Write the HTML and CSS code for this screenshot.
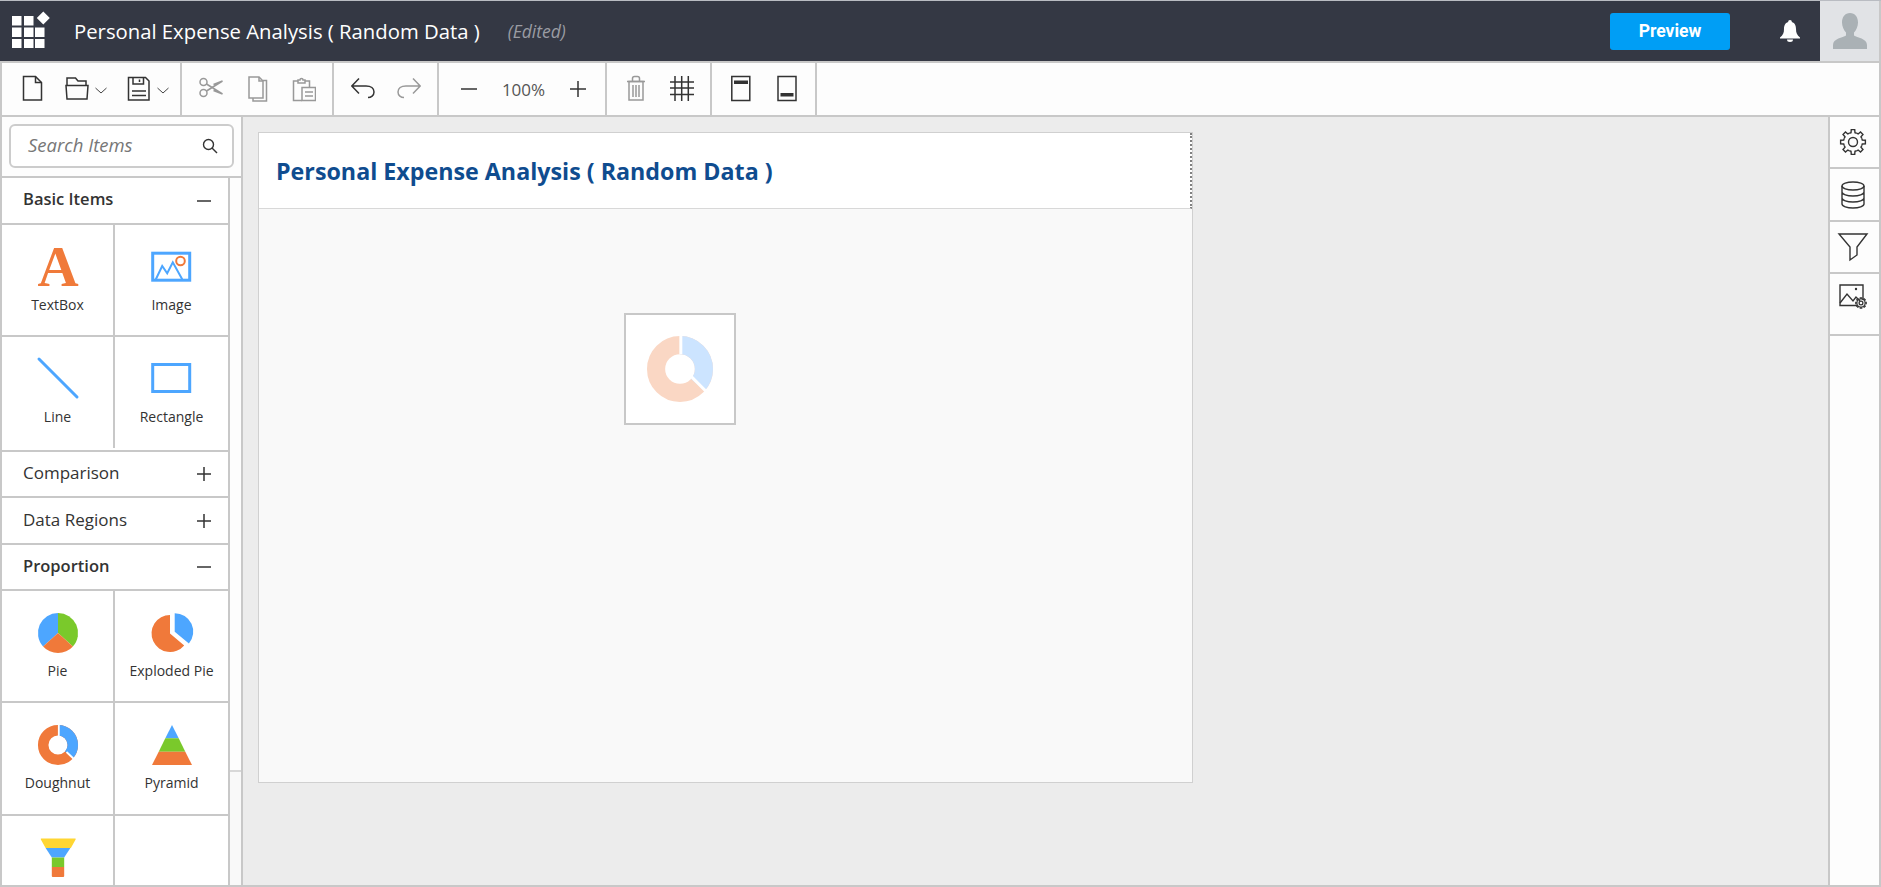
FILE: index.html
```html
<!DOCTYPE html>
<html lang="en">
<head>
<meta charset="utf-8">
<title>Personal Expense Analysis</title>
<link rel="stylesheet" href="styles.css">
</head>
<body>
<svg class="defs" width="0" height="0" aria-hidden="true"><defs>
  <g id="gear"><g id="tooth4"><g id="tooth2"><path id="tooth" d="M-3.64-8.78L-1.98-9.29-1.74-12.38H1.74L1.98-9.29 3.64-8.78"/><use href="#tooth" transform="rotate(45)"/></g><use href="#tooth2" transform="rotate(90)"/></g><use href="#tooth4" transform="rotate(180)"/></g>
</defs></svg>
<div class="app">
  <header class="header">
    <svg class="logo" width="38" height="33" viewBox="0 0 38 33" fill="#fff"><path d="M0 1h9.500v9.500H0zM12 1h9.500v9.500H12zM0 12.500h9.500V22H0zM12 12.500h9.500V22H12zM23 12.500h9.500V22H23zM0 24h9.500v9H0zM12 24h9.500v9H12zM23 24h9.500v9H23zM31.300-3.500l6.500 6.500-6.500 6.500-6.500-6.500z"/></svg>
    <span class="doc-title">Personal Expense Analysis ( Random Data )</span>
    <span class="doc-state">(Edited)</span>
    <button class="preview">Preview</button>
    <svg class="bell" width="20" height="22" viewBox="0 0 20 22" fill="#fff"><path d="M10 0a1.800 1.800 0 0 1 1.800 2C15 3 16 6 16 9c0 4 1 6 4 8.500v1H0v-1C3 15 4 13 4 9c0-3 1-6 4.200-7A1.800 1.800 0 0 1 10 0zM7 19.500h6a3 2.500 0 0 1-6 0z"/></svg>
    <div class="avatar">
      <svg width="34" height="36" viewBox="0 0 34 36" fill="#aab1b5"><path d="M17 0c5 0 8 4 8 9.500 0 4-2 8-4 10v3c3 2 13 3 13 9.500v4H0v-4c0-6.500 10-7.500 13-9.500v-3c-2-2-4-6-4-10C9 4 12 0 17 0z"/></svg>
    </div>
  </header>

  <nav class="toolbar">
    <div class="tb-group tb-file">
      <svg class="ic dark" viewBox="0 0 24 28"><path d="M2.500 1.500h12l6 6v17.500h-18z"/><path d="M14.500 1.500v6h6"/></svg>
      <svg class="ic dark gap20" viewBox="0 0 24 28"><path d="M2 10V3h8.500l2.500 3h8v4"/><path d="M1 10.500h22l-1 13.500H2z"/></svg>
      <svg class="chev" viewBox="0 0 12 28"><path d="M.5 13l5.500 5 5.500-5"/></svg>
      <svg class="ic dark gap20" viewBox="0 0 24 28"><path d="M1.500 2.500h17l3.500 3.500v19H1.500z"/><path d="M6 2.500v6.500h10.500V2.500M12.500 4.500v2.500M5 16h14M5 20.500h14"/></svg>
      <svg class="chev" viewBox="0 0 12 28"><path d="M.5 13l5.500 5 5.500-5"/></svg>
    </div>
    <div class="tb-group tb-clip">
      <svg class="ic gray" viewBox="0 0 24 28"><circle cx="4.500" cy="7" r="3.500"/><circle cx="4.500" cy="18" r="3.500"/><path d="M7.500 9l16 10-9-3.500M7.500 16l16-10-9 3.500"/></svg>
      <svg class="ic gray" viewBox="0 0 24 28"><path d="M3 2h10l4 4v17H3z"/><path d="M13 2v4h4M17 5.500h3.500V26H7v-3"/></svg>
      <svg class="ic gray" viewBox="0 0 24 28"><path d="M10 25.500H1.500V6H6M13 6h4.500v6"/><path d="M6 8V5h2a1.500 1.500 0 0 1 3 0h2v3z"/><path d="M10 12.500h13.500v13H10zM13 17h8M13 21h8"/></svg>
    </div>
    <div class="tb-group tb-hist">
      <svg class="ic dark" viewBox="0 0 24 28"><path d="M8 3.500L.8 11 8 18.500M1 11h14c5 0 8 2.500 8 6 0 3.500-3 5.500-6 5.500"/></svg>
      <svg class="ic gray" viewBox="0 0 24 28"><path d="M16 3.500L23.200 11 16 18.500M23 11H9c-5 0-8 2.500-8 6 0 3.500 3 5.500 6 5.500"/></svg>
    </div>
    <div class="tb-group tb-zoom">
      <svg class="ic dark" viewBox="0 0 24 28"><path d="M4 14h16"/></svg>
      <span class="zoom-val">100%</span>
      <svg class="ic dark" viewBox="0 0 24 28"><path d="M4 14h16M12 6v16"/></svg>
    </div>
    <div class="tb-group tb-hist">
      <svg class="ic gray" viewBox="0 0 24 28"><path d="M3 6.500h18M8.500 6V3.500a2 2 0 0 1 2-2h3a2 2 0 0 1 2 2V6"/><path d="M5 6.500h14v18.500H5zM9 10v12M12 10v12M15 10v12"/></svg>
      <svg class="ic dark" viewBox="0 0 24 28"><path d="M0 7h24M0 13h24M0 19.500h24M5 1v25M11.700 1v25M18.300 1v25"/></svg>
    </div>
    <div class="tb-group tb-hist">
      <svg class="ic dark" viewBox="0 0 24 28"><rect x="2.800" y="1.500" width="18" height="24"/><path class="solid" d="M5 5.500h14v3.500H5z"/></svg>
      <svg class="ic dark" viewBox="0 0 24 28"><rect x="3" y="1.500" width="18" height="24"/><path class="solid" d="M5.500 18h13v3.500h-13z"/></svg>
    </div>
  </nav>

  <main class="main">
    <aside class="sidebar">
      <div class="search-row">
        <div class="search">
          <span class="search-text">Search Items</span>
          <svg class="search-ic" width="16" height="16" viewBox="0 0 16 16"><circle cx="6.500" cy="6.500" r="5"/><path d="M10 10l5 5"/></svg>
        </div>
      </div>
      <div class="side-body">
        <div class="accordion">
          <div class="acc-head open tall"><span>Basic Items</span><svg class="sign" viewBox="0 0 14 14"><path d="M0 7h14"/></svg></div>
          <div class="cells">
            <div class="cell"><svg class="cell-ic" viewBox="0 0 40 40"><text class="glyph-a" x="20" y="39" text-anchor="middle">A</text></svg><span class="label">TextBox</span></div>
            <div class="cell"><svg class="cell-ic" viewBox="0 0 40 40"><rect x=".7" y="6.200" width="37" height="27" class="ln"/><path class="ln thin" d="M3.500 33l6.700-14 5 7.300 5.600-11 9.400 17"/><circle cx="28.500" cy="14" r="4.300" class="or"/></svg><span class="label">Image</span></div>
          </div>
          <div class="cells tall-row">
            <div class="cell"><svg class="cell-ic" viewBox="0 0 40 40"><path class="ln" d="M1 0l38 38" stroke-linecap="round"/></svg><span class="label">Line</span></div>
            <div class="cell"><svg class="cell-ic" viewBox="0 0 40 40"><rect x=".7" y="5.500" width="37" height="27" class="ln"/></svg><span class="label">Rectangle</span></div>
          </div>
          <div class="acc-head"><span>Comparison</span><svg class="sign" viewBox="0 0 14 14"><path d="M0 7h14M7 0v14"/></svg></div>
          <div class="acc-head tall"><span>Data Regions</span><svg class="sign" viewBox="0 0 14 14"><path d="M0 7h14M7 0v14"/></svg></div>
          <div class="acc-head open"><span>Proportion</span><svg class="sign" viewBox="0 0 14 14"><path d="M0 7h14"/></svg></div>
          <div class="cells">
            <div class="cell"><svg class="cell-ic" viewBox="0 0 40 40"><path fill="#4da6ff" d="M20 20L5.100 33.400A20 20 0 0 1 20 0z"/><path fill="#7ac92b" d="M20 20V0a20 20 0 0 1 14.900 33.400z"/><path fill="#f0793a" d="M20 20l14.900 13.400a20 20 0 0 1-29.800 0z"/></svg><span class="label">Pie</span></div>
            <div class="cell"><svg class="cell-ic" viewBox="0 0 40 40"><path fill="#f0793a" d="M18 20.500V2a18.500 18.500 0 1 0 14.200 30.400z"/><path fill="#4da6ff" d="M22.700 18.700V.2a18.500 18.500 0 0 1 14.200 30.400z"/></svg><span class="label">Exploded Pie</span></div>
          </div>
          <div class="cells tall-one">
            <div class="cell"><svg class="cell-ic" viewBox="0 0 40 40"><circle class="ring" cx="20" cy="20" r="14.800" stroke="#f0793a"/><circle class="ring" cx="20" cy="20" r="14.800" stroke="#4da6ff" pathLength="360" stroke-dasharray="132 228" transform="rotate(-90 20 20)"/><path class="gap" d="M20.800-1V11M28.500 27L38 36"/></svg><span class="label">Doughnut</span></div>
            <div class="cell"><svg class="cell-ic" viewBox="0 0 40 40"><path fill="#4da6ff" d="M20 0l6.700 13.300H13.300z"/><path fill="#7ac92b" d="M13.300 13.300h13.400l6.600 13.400H6.700z"/><path fill="#f0793a" d="M6.700 26.700h26.600L40 40H0z"/></svg><span class="label">Pyramid</span></div>
          </div>
          <div class="cells last">
            <div class="cell"><svg class="cell-ic" viewBox="0 0 40 42"><path fill="#ffd633" d="M1.500 0.500h36.500q1 0 .5 1l-5 9H7l-5-9q-.5-1 .5-1z"/><path fill="#4da6ff" d="M7 10.500h26l-6.500 10h-13z"/><path fill="#7ac92b" d="M13.500 20.500h13v10h-13z"/><path fill="#f0793a" d="M13.500 30.500h13V40q0 1-1 1h-11q-1 0-1-1z"/></svg></div>
            <div class="cell"></div>
          </div>
        </div>
        <div class="scroll"><div class="thumb"></div></div>
      </div>
    </aside>

    <section class="stage">
      <div class="report">
        <div class="report-head"><h1 class="report-title">Personal Expense Analysis ( Random Data )</h1></div>
        <div class="widget">
          <svg width="66" height="66" viewBox="0 0 40 40"><circle class="ring wide" cx="20" cy="20" r="14.500" stroke="#fad7c4"/><circle class="ring wide" cx="20" cy="20" r="14.500" stroke="#cce4ff" pathLength="360" stroke-dasharray="132 228" transform="rotate(-90 20 20)"/><path class="gap" d="M20.500-1V11M26.900 24.600L38 35.800"/></svg>
        </div>
      </div>
    </section>

    <aside class="rail">
      <div class="rail-item r1"><svg class="ic-rail" width="28" height="28" viewBox="-14 -14 28 28"><use href="#gear"/><circle r="4.500"/></svg></div>
      <div class="rail-item r2"><svg class="ic-rail" width="24" height="28" viewBox="0 0 24 28"><ellipse cx="12" cy="5" rx="11" ry="4"/><path d="M1 5v18c0 2.200 5 4 11 4s11-1.800 11-4V5M1 11c0 2.200 5 4 11 4s11-1.800 11-4M1 17c0 2.200 5 4 11 4s11-1.800 11-4"/></svg></div>
      <div class="rail-item r1"><svg class="ic-rail" width="30" height="28" viewBox="0 0 30 28"><path d="M1 1h28L19 14v8l-7 5V14z"/></svg></div>
      <div class="rail-item r3"><svg class="ic-rail" width="28" height="28" viewBox="0 0 28 28"><path d="M18 21.500H1V1h23v15"/><path d="M1 19l7-9 6 7 3-4 4 4"/><circle cx="17" cy="5" r="1.200" class="solid"/><g transform="translate(22 19) scale(.42)" class="small-gear"><use href="#gear"/><circle r="4.500"/></g></svg></div>
    </aside>
  </main>
</div>
</body>
</html>
```
FILE: styles.css
```css
* { box-sizing: border-box; }
html, body { margin: 0; height: 100%; overflow: hidden; }
body { font-family: "Open Sans", "Noto Sans", sans-serif; color: #333; background: #fff; }
.defs { position: absolute; }
.app { height: 887px; display: flex; flex-direction: column; border-top: 1px solid #b9bcc2; border-bottom: 2px solid #c8c8c8; }

.header { height: 62px; flex: none; display: flex; align-items: center; background: #343844; border-bottom: 2px solid #c8c8c8; border-right: 2px solid #c8c8c8; }
.logo { margin-left: 12px; flex: none; overflow: visible; }
.doc-title { margin-left: 24px; color: #fff; font-size: 20.300px; white-space: nowrap; }
.doc-state { margin-left: 28px; color: #9a9ca3; font-size: 17.500px; font-style: italic; }
.preview { margin-left: auto; width: 120px; height: 37px; border: 0; border-radius: 3px; background: #009ef5; color: #fff; font: 700 17.500px Roboto, sans-serif; }
.bell { margin-left: 50px; flex: none; }
.avatar { margin-left: 20px; width: 59px; height: 60px; background: #e1e3e6; display: flex; align-items: center; justify-content: center; }

.toolbar { height: 54px; flex: none; display: flex; background: #fdfdfd; border-bottom: 2px solid #c8c8c8; border-left: 2px solid #c8c8c8; border-right: 2px solid #c8c8c8; }
.tb-group { height: 52px; display: flex; align-items: center; border-right: 2px solid #c8c8c8; }
.tb-file { width: 180px; padding-left: 19px; }
.tb-clip { width: 152px; padding-left: 17px; gap: 22.500px; }
.tb-hist { width: 105px; padding-left: 17px; gap: 22px; }
.tb-zoom { width: 168px; padding-left: 18px; }
.ic { width: 24px; height: 28px; flex: none; fill: none; stroke-width: 1.500; }
.ic.dark { stroke: #333; }
.ic.gray { stroke: #999; }
.ic .solid { fill: #333; stroke: none; }
.gap20 { margin-left: 20px; }
.chev { width: 12px; height: 28px; margin-left: 6px; flex: none; fill: none; stroke: #444; stroke-width: 1; }
.zoom-val { width: 85px; text-align: center; font-size: 17px; color: #555; }

.main { flex: 1; min-height: 0; display: flex; border-left: 2px solid #c8c8c8; border-right: 2px solid #c8c8c8; }
.sidebar { width: 241px; flex: none; display: flex; flex-direction: column; background: #fdfdfd; border-right: 2px solid #c8c8c8; }
.search-row { height: 61px; flex: none; padding: 7px 7px 0 7px; border-bottom: 2px solid #c8c8c8; }
.search { height: 44px; display: flex; align-items: center; justify-content: space-between; padding: 0 14px 0 17px; background: #fff; border: 2px solid #ccc; border-radius: 6px; }
.search-text { margin-bottom: 3px; font-size: 18.500px; font-style: italic; color: #777; }
.search-ic { fill: none; stroke: #333; stroke-width: 1.400; }

.side-body { flex: 1; min-height: 0; display: flex; }
.accordion { width: 228px; flex: none; overflow: hidden; background: #fff; border-right: 2px solid #c8c8c8; }
.scroll { flex: 1; background: #f9f9f9; }
.thumb { height: 594px; background: #fdfdfd; border-bottom: 2px solid #d8d8d8; }
.acc-head { height: 46px; display: flex; align-items: center; justify-content: space-between; padding: 0 17px 0 21px; border-bottom: 2px solid #c8c8c8; font-size: 17px; }
.acc-head span { margin-bottom: 3px; }
.acc-head.tall { height: 47px; }
.acc-head.open { font-weight: 600; font-size: 16.500px; }
.acc-head.open span { margin-bottom: 4px; }
.sign { width: 14px; height: 14px; fill: none; stroke: #333; stroke-width: 1.500; }
.cells { height: 112px; display: flex; border-bottom: 2px solid #c8c8c8; }
.tall-row { height: 115px; }
.tall-row .cell { height: 111px; }
.tall-one { height: 113px; }
.cells.last { height: 72px; border-bottom: 0; }
.cell { width: 113px; height: 100%; display: flex; flex-direction: column; align-items: center; padding-top: 22px; border-right: 2px solid #c8c8c8; }
.cell + .cell { width: 113px; border-right: 0; }
.cell-ic { width: 40px; height: 40px; flex: none; overflow: visible; }
.label { margin-top: 9px; font-size: 14px; line-height: 18px; white-space: nowrap; }
.glyph-a { font: 700 57px "Liberation Serif", serif; fill: #f07a3a; }
.ln { fill: none; stroke: #4da6ff; stroke-width: 3; }
.ln.thin { stroke-width: 2; }
.or { fill: #fff; stroke: #f0793a; stroke-width: 2; }
.ring { fill: none; stroke-width: 10.500; }
.ring.wide { stroke-width: 11; }
.gap { fill: none; stroke: #fff; stroke-width: 1.800; }

.stage { flex: 1; min-width: 0; background: #ececec; padding: 15px 0 0 15px; }
.report { position: relative; width: 935px; height: 651px; background: #f9f9f9; border: 1px solid #d0d0d0; }
.report-head { height: 76px; display: flex; align-items: center; padding-left: 17px; background: #fff; border-bottom: 1px solid #d8d8d8; border-right: 2px dotted #808080; }
.report-title { margin: 0; font-size: 23.250px; font-weight: 700; color: #0f4c8f; white-space: nowrap; }
.widget { position: absolute; left: 365px; top: 180px; width: 112px; height: 112px; display: flex; align-items: center; justify-content: center; background: #fff; border: 2px solid #c8c8c8; }

.rail { width: 51px; flex: none; background: #fdfdfd; border-left: 2px solid #c8c8c8; }
.rail-item { display: flex; justify-content: center; align-items: center; padding-right: 3px; border-bottom: 2px solid #c8c8c8; }
.r1 { height: 52px; }
.r2 { height: 53px; }
.r3 { height: 62px; align-items: flex-start; padding-top: 10px; }
.ic-rail { fill: none; stroke: #333; stroke-width: 1.400; overflow: visible; }
.ic-rail .solid { fill: #333; stroke: none; }
.small-gear { stroke-width: 3; fill: #fdfdfd; }
```
